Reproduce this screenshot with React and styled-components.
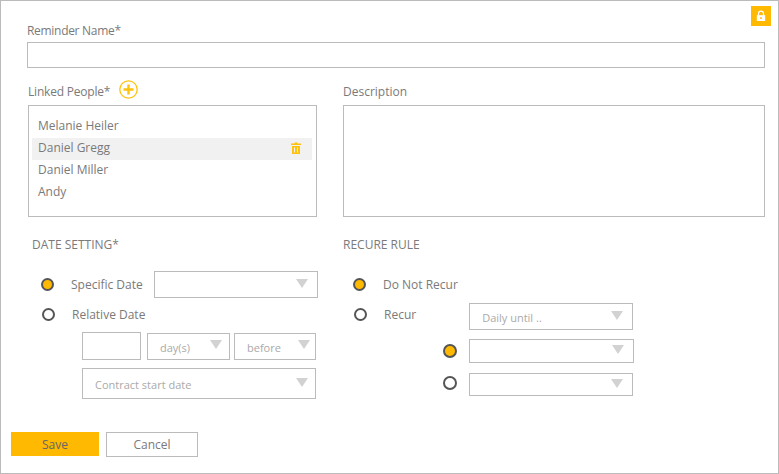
import styled, { createGlobalStyle } from "styled-components";

const GlobalStyle = createGlobalStyle`
  html, body { margin: 0; padding: 0; background: #fff; }
  * { box-sizing: border-box; }
  body { font-family: "Open Sans", "Noto Sans", sans-serif; font-size: 12px; color: #7a7a7a; }
`;

const Frame = styled.div`
  position: relative;
  width: 779px;
  height: 474px;
  border: 1px solid #bbb;
  padding: 21px 13px 0 10px;
`;

const LockBadge = styled.div`
  position: absolute;
  top: 5px;
  right: 7px;
  width: 20px;
  height: 20px;
  background: #ffb900;
  display: flex;
  align-items: center;
  justify-content: center;
`;

const Body = styled.div`
  margin-left: 16px;
`;

const Label = styled.div`
  height: 16px;
  line-height: 16px;
  padding-top: ${(p) => p.$drop || 0}px;
  letter-spacing: ${(p) => p.$track || 0}px;
  white-space: nowrap;
`;

const NameInput = styled.input`
  display: block;
  width: 100%;
  height: 26px;
  margin-top: 4px;
  border: 1px solid #bbb;
  outline: none;
`;

const Columns = styled.div`
  display: grid;
  grid-template-columns: 289px 422px;
  column-gap: 26px;
  padding-left: 1px;
  margin-top: ${(p) => p.$top}px;
`;

const LabelRow = styled.div`
  display: flex;
  align-items: center;
  gap: 9px;
  height: 19px;
  margin-bottom: 6px;
`;

const AddButton = styled.span`
  display: flex;
  width: 19px;
  height: 19px;
`;

const PeopleBox = styled.div`
  height: 112px;
  border: 1px solid #bbb;
  padding: 10px 4px 0 3px;
`;

const PersonRow = styled.div`
  display: flex;
  align-items: center;
  justify-content: space-between;
  height: 22px;
  padding: 0 11px 3px 6px;
  background: ${(p) => (p.$active ? "#f1f1f1" : "transparent")};
`;

const Description = styled.textarea`
  display: block;
  width: 100%;
  height: 112px;
  border: 1px solid #bbb;
  outline: none;
  resize: none;
`;

const SectionTitle = styled.div`
  height: 16px;
  line-height: 16px;
  padding-top: 1px;
  margin-bottom: 19px;
  margin-left: ${(p) => p.$left || 0}px;
`;

const Row = styled.div`
  display: flex;
  align-items: center;
  height: ${(p) => p.$h}px;
  margin-top: ${(p) => p.$top || 0}px;
  padding-left: ${(p) => p.$left || 0}px;
`;

const RadioGroup = styled.div`
  flex: none;
  display: flex;
  align-items: center;
  margin-bottom: ${(p) => p.$lift || 0}px;
`;

const Radio = styled.span`
  flex: none;
  width: ${(p) => p.$size || 13}px;
  height: ${(p) => p.$size || 13}px;
  border-radius: 50%;
  border: 2px solid #555;
  background: ${(p) => (p.$on ? "#ffb900" : "#fff")};
`;

const RadioText = styled.span`
  margin-left: 17px;
  white-space: nowrap;
`;

const Select = styled.div`
  flex: none;
  display: flex;
  align-items: center;
  justify-content: space-between;
  width: ${(p) => p.$w}px;
  height: ${(p) => p.$h}px;
  margin-left: ${(p) => p.$left || 0}px;
  padding: 2px ${(p) => p.$right || 9}px 0 ${(p) => p.$pad || 12}px;
  border: 1px solid #bbb;
  color: #aaa;
  font-size: 11px;
  white-space: nowrap;
`;

const Arrow = styled.span`
  width: 0;
  height: 0;
  margin-left: auto;
  margin-top: -5px;
  border-left: 6px solid transparent;
  border-right: 6px solid transparent;
  border-top: 9px solid #d2d2d2;
`;

const SmallInput = styled.input`
  flex: none;
  width: 59px;
  height: 28px;
  border: 1px solid #bbb;
  outline: none;
`;

const Footer = styled.div`
  display: flex;
  gap: 7px;
  margin-top: 33px;
`;

const Button = styled.button`
  width: ${(p) => p.$w}px;
  height: ${(p) => p.$h}px;
  border: ${(p) => (p.$primary ? "none" : "1px solid #bbb")};
  background: ${(p) => (p.$primary ? "#ffb900" : "#fff")};
  color: ${(p) => (p.$primary ? "#666" : "#7a7a7a")};
  font: inherit;
  padding: 0;
`;

const LockIcon = () => (
  <svg width="10" height="12" viewBox="0 0 12 14">
    <path d="M3 6V4a3 3 0 0 1 6 0v2" fill="none" stroke="#fff" strokeWidth="1.5" />
    <rect x="1" y="6" width="10" height="7" fill="#fff" />
    <rect x="5" y="8.5" width="2" height="2" fill="#ffb900" />
  </svg>
);

const PlusIcon = () => (
  <svg width="19" height="19" viewBox="0 0 19 19">
    <circle cx="9.5" cy="9.5" r="8.7" fill="#fff" stroke="#ffc20e" strokeWidth="1.3" />
    <path d="M9.5 4.5v10M4.5 9.5h10" stroke="#ffc20e" strokeWidth="2.4" />
  </svg>
);

const TrashIcon = () => (
  <svg width="10" height="12" viewBox="0 0 10 12">
    <path d="M3.5 1.5V.5h3v1H10v1.5H0V1.5z" fill="#ffc20e" />
    <path d="M1 4h8v8H1zM3 5.5v5h1v-5zM6 5.5v5h1v-5z" fill="#ffc20e" fillRule="evenodd" />
  </svg>
);

const people = ["Melanie Heiler", "Daniel Gregg", "Daniel Miller", "Andy"];

const App = () => {
  return (
    <>
      <GlobalStyle />
      <Frame>
        <LockBadge>
          <LockIcon />
        </LockBadge>
        <Body>
          <Label $drop={1} $track={-0.3}>
            Reminder Name*
          </Label>
          <NameInput />
          <Columns $top={12}>
            <div>
              <LabelRow>
                <Label $drop={2} $track={-0.2}>
                  Linked People*
                </Label>
                <AddButton>
                  <PlusIcon />
                </AddButton>
              </LabelRow>
              <PeopleBox>
                {people.map((name, i) => (
                  <PersonRow key={name} $active={i === 1}>
                    {name}
                    {i === 1 && <TrashIcon />}
                  </PersonRow>
                ))}
              </PeopleBox>
            </div>
            <div>
              <LabelRow>
                <Label $drop={2}>Description</Label>
              </LabelRow>
              <Description />
            </div>
          </Columns>
          <Columns $top={19}>
            <div>
              <SectionTitle $left={4}>DATE SETTING*</SectionTitle>
              <Row $h={27} $left={13}>
                <RadioGroup>
                  <Radio $on />
                  <RadioText>Specific Date</RadioText>
                </RadioGroup>
                <Select $w={164} $h={27} $left={11}>
                  <Arrow />
                </Select>
              </Row>
              <Row $h={16} $top={8} $left={14}>
                <RadioGroup>
                  <Radio />
                  <RadioText>Relative Date</RadioText>
                </RadioGroup>
              </Row>
              <Row $h={28} $top={10} $left={54}>
                <SmallInput />
                <Select $w={83} $h={27} $left={6} $right={7}>
                  day(s)
                  <Arrow />
                </Select>
                <Select $w={82} $h={27} $left={4} $right={5}>
                  before
                  <Arrow />
                </Select>
              </Row>
              <Row $h={31} $top={8} $left={54}>
                <Select $w={234} $h={31} $right={7}>
                  Contract start date
                  <Arrow />
                </Select>
              </Row>
            </div>
            <div>
              <SectionTitle>RECURE RULE</SectionTitle>
              <Row $h={27} $left={10}>
                <RadioGroup>
                  <Radio $on />
                  <RadioText>Do Not Recur</RadioText>
                </RadioGroup>
              </Row>
              <Row $h={27} $top={5} $left={11}>
                <RadioGroup $lift={4}>
                  <Radio />
                  <RadioText>Recur</RadioText>
                </RadioGroup>
                <Select $w={164} $h={27} $left={53}>
                  Daily until ..
                  <Arrow />
                </Select>
              </Row>
              <Row $h={24} $top={9} $left={100}>
                <Radio $on $size={14} />
                <Select $w={165} $h={24} $left={12}>
                  <Arrow />
                </Select>
              </Row>
              <Row $h={23} $top={10} $left={100}>
                <RadioGroup $lift={4}>
                  <Radio $size={14} />
                </RadioGroup>
                <Select $w={164} $h={23} $left={12}>
                  <Arrow />
                </Select>
              </Row>
            </div>
          </Columns>
        </Body>
        <Footer>
          <Button $primary $w={88} $h={24}>
            Save
          </Button>
          <Button $w={92} $h={25}>
            Cancel
          </Button>
        </Footer>
      </Frame>
    </>
  );
};

export default App;
